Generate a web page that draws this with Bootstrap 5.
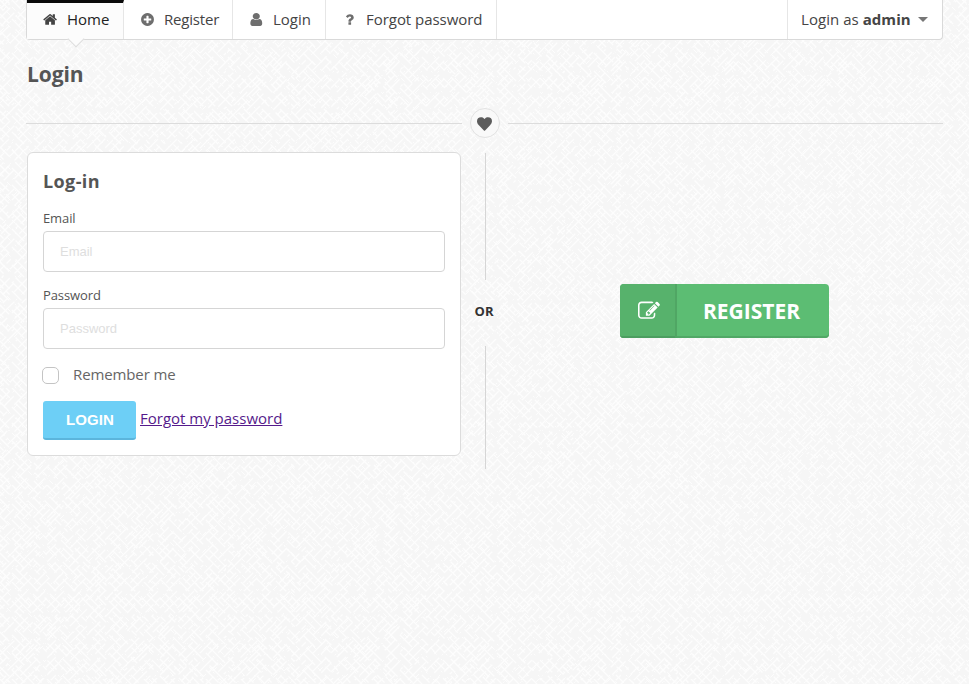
<!DOCTYPE html>
<html lang="en">
<head>
<meta charset="utf-8">
<meta name="viewport" content="width=device-width, initial-scale=1">
<title>Login</title>
<link href="https://cdn.jsdelivr.net/npm/bootstrap@5.3.0/dist/css/bootstrap.min.css" rel="stylesheet">
<style>
body{font-family:"Open Sans",sans-serif;font-size:15px;line-height:20px;color:#666;min-height:684px;background-color:#f6f6f6;
background-image:
url("data:image/svg+xml,%3Csvg xmlns='http://www.w3.org/2000/svg' width='97' height='97'%3E%3Cg stroke='%23fdfdfd' stroke-width='1.300' fill='none'%3E%3Cpath stroke-dasharray='13 9 22 5 7 11' d='M0 0l97 97M12 0l85 85M0 85l12 12M29 0l68 68M0 68l29 29M47 0l50 50M0 50l47 47M66 0l31 31M0 31l66 66M83 0l14 14M0 14l83 83'/%3E%3Cpath stroke-dasharray='5 12 17 14 9 4' d='M6 0l91 91M0 91l6 6M21 0l76 76M0 76l21 21M38 0l59 59M0 59l38 38M56 0l41 41M0 41l56 56M74 0l23 23M0 23l74 74M90 0l7 7M0 7l90 90'/%3E%3C/g%3E%3C/svg%3E"),
url("data:image/svg+xml,%3Csvg xmlns='http://www.w3.org/2000/svg' width='113' height='113'%3E%3Cg stroke='%23fdfdfd' stroke-width='1.300' fill='none'%3E%3Cpath stroke-dasharray='11 7 19 10 6 3' d='M113 0L0 113M9 0L0 9M113 9L9 113M27 0L0 27M113 27L27 113M44 0L0 44M113 44L44 113M62 0L0 62M113 62L62 113M80 0L0 80M113 80L80 113M99 0L0 99M113 99L99 113'/%3E%3Cpath stroke-dasharray='3 8 14 12 24 9' d='M4 0L0 4M113 4L4 113M18 0L0 18M113 18L18 113M35 0L0 35M113 35L35 113M53 0L0 53M113 53L53 113M71 0L0 71M113 71L71 113M90 0L0 90M113 90L90 113M107 0L0 107M113 107L107 113'/%3E%3C/g%3E%3C/svg%3E"),
url("data:image/svg+xml,%3Csvg xmlns='http://www.w3.org/2000/svg' width='71' height='71'%3E%3Cpath stroke='%23fff' stroke-opacity='.8' stroke-dasharray='2 4 1 3 5 6 2 7' d='M0 5l66 66M0 17l54 54M0 33l38 38M0 48l23 23M5 0l66 66M22 0l49 49M39 0l32 32M58 0l13 13M13 0L0 13M32 0L0 32M50 0L0 50M67 0L0 67M71 11L11 71M71 28L28 71M71 45L45 71'/%3E%3C/svg%3E")}
.glyph{fill:currentColor;display:block;flex:none}
.page-wrap{padding:0 26px}
.topbar{height:40px;background:#fff;border:1px solid #d9d9d9;border-top:0;border-radius:0 0 4px 4px}
.topbar .nav-link{height:39px;padding:0 0 0 16px;border-right:1px solid #e6e6e6;color:#444;gap:9px}
.topbar .nav-link>span:first-of-type{padding-bottom:2px}
.topbar .glyph{color:#6e6e6e}
.topbar .nav-link.current{position:relative;width:97px;color:#222;background:#fcfcfc;border-top:3px solid #0a0a0a;padding-bottom:3px}
.topbar .nav-link.current .glyph{color:#444}
.topbar .nav-link.current::after{content:"";position:absolute;left:43px;bottom:-6px;width:12px;height:12px;background:#fcfcfc;border:solid #ddd;border-width:0 1px 1px 0;transform:rotate(45deg)}
.topbar .to-register{width:109px;letter-spacing:-.2px}
.topbar .to-login{width:93px}
.topbar .to-forgot{width:171px;letter-spacing:-.04px}
.topbar .account{border-left:1px solid #e6e6e6;border-right:0;width:155px;padding:0 0 0 13px;letter-spacing:.05px}
.caret{border:5px solid transparent;border-top-color:#777;border-bottom:0;margin-left:-2px}
.page-title{font-size:21px;line-height:30px;font-weight:700;color:#555;margin:19px 0 19px 1px;letter-spacing:-.1px}
.rule{height:1px;background:#dcdcdc}
.heart{width:30px;height:30px;border:1px solid #e2e2e2;background:#f9f9f9;color:#5c5c5c;margin:0 8px;padding-top:1px}
.panels{padding-top:14px}
.login-box{width:434px;height:304px;margin-left:1px;padding:16px 15px 0;border:1px solid #dcdcdc;border-radius:6px;background:#fff}
.login-box h2{font-size:18px;line-height:24px;font-weight:700;color:#555;margin:0 0 16px;letter-spacing:.4px}
.login-box label.field-name{font-size:13px;line-height:18px;display:block;margin-bottom:4px;color:#555;letter-spacing:-.1px}
.login-box .form-control{height:41px;padding:0 16px;font:13px "Liberation Sans",Arial,sans-serif;border-color:#d5d5d5;border-radius:4px;margin-bottom:14px}
.login-box .form-control::placeholder{color:#dedede}
.login-box .form-check-input{width:17px;height:17px;border:1px solid #c4c4c4;border-radius:5px;margin:3px 14px 0 -1px;float:none}
.remember{margin:15px 0 17px;height:20px;letter-spacing:-.12px}
.actions{gap:4px}
.btn-login{width:93px;height:39px;padding:0 0 0 1px;border:0;border-bottom:2px solid #5bb5dc;border-radius:3px;background:#6dcff6;color:#fff;font:bold 15px "Liberation Sans",Arial,sans-serif;letter-spacing:.1px}
.forgot{color:#551a8b;margin-top:7px}
.splitter{width:24px;margin-left:12px;padding-top:1px}
.vline{width:1px;height:127px;background:#d6d6d6}
.vline:last-child{height:123px}
.or-word{font-size:13px;font-weight:700;color:#333;height:66px;line-height:63px;margin-right:2px}
.register-side{padding-left:8px}
.btn-register{width:209px;height:54px;margin-top:132px;border-radius:4px;background:#5cbd73;color:#fff;border:0;box-shadow:inset 0 -2px #51a866;font-size:21px;font-weight:700;overflow:hidden}
.btn-register:hover{background:#5cbd73;color:#fff}
.reg-label{padding:1px 2px 0 0}
.reg-icon{width:57px;height:54px;padding-left:4px;background:#57b26c;border-right:2px solid #50a664;box-shadow:inset 0 -2px #4c9e60}
</style>
<script src="https://cdn.jsdelivr.net/npm/bootstrap@5.3.0/dist/js/bootstrap.bundle.min.js"></script>
</head>
<body>
<div class="page-wrap">
<nav class="topbar d-flex justify-content-between">
<div class="d-flex">
<a href="#" class="nav-link current d-flex align-items-center"><svg class="glyph" width="15" height="15" viewBox="50 0 1792 1792"><path d="M1472 992v480q0 26-19 45t-45 19h-384v-384h-256v384h-384q-26 0-45-19t-19-45v-480q0-1 .5-3t.5-3l575-474 575 474q1 2 1 6zm223-69l-62 74q-8 9-21 11h-3q-13 0-21-7l-692-577-692 577q-12 8-24 7-13-2-21-11l-62-74q-8-10-7-23.500t11-21.500l719-599q32-26 76-26t76 26l244 204v-195q0-14 9-23t23-9h192q14 0 23 9t9 23v408l219 182q10 8 11 21.500t-7 23.500z"/></svg><span>Home</span></a>
<a href="#" class="nav-link to-register d-flex align-items-center"><svg class="glyph" width="15" height="15" viewBox="0 0 1792 1792"><path d="M1344 960v-128q0-26-19-45t-45-19h-256v-256q0-26-19-45t-45-19h-128q-26 0-45 19t-19 45v256h-256q-26 0-45 19t-19 45v128q0 26 19 45t45 19h256v256q0 26 19 45t45 19h128q26 0 45-19t19-45v-256h256q26 0 45-19t19-45zm320-64q0 209-103 385.500t-279.500 279.500-385.500 103-385.500-103-279.500-279.500-103-385.500 103-385.500 279.500-279.500 385.500-103 385.500 103 279.500 279.500 103 385.500z"/></svg><span>Register</span></a>
<a href="#" class="nav-link to-login d-flex align-items-center"><svg class="glyph" width="15" height="15" viewBox="110 0 1620 1792" preserveAspectRatio="none"><path d="M1536 1399q0 109-62.500 187t-150.500 78h-854q-88 0-150.500-78t-62.500-187q0-85 8.500-160.500t31.500-152 58.500-131 94-89 134.500-34.500q131 128 313 128t313-128q76 0 134.500 34.500t94 89 58.500 131 31.500 152 8.500 160.500zm-256-887q0 159-112.500 271.500t-271.500 112.500-271.500-112.500-112.500-271.500 112.500-271.500 271.500-112.500 271.500 112.500 112.500 271.500z"/></svg><span>Login</span></a>
<a href="#" class="nav-link to-forgot d-flex align-items-center"><svg class="glyph" width="15" height="15" viewBox="0 0 1792 1792"><path d="M1088 1256v240q0 16-12 28t-28 12h-240q-16 0-28-12t-12-28v-240q0-16 12-28t28-12h240q16 0 28 12t12 28zm316-600q0 54-15.500 101t-35 76.500-55 59.500-57.500 43.500-61 35.500q-41 23-68.500 65t-27.500 67q0 17-12 32.500t-28 15.500h-240q-15 0-25.500-18.500t-10.500-37.500v-45q0-83 65-156.500t143-108.500q59-27 84-56t25-76q0-42-46.500-74t-107.500-32q-65 0-108 29-35 25-107 115-13 16-31 16-12 0-25-8l-164-125q-13-10-15.500-25t5.500-28q160-266 464-266 80 0 161 31t146 83 106 127.500 41 158.500z"/></svg><span>Forgot password</span></a>
</div>
<a href="#" class="nav-link account d-flex align-items-center"><span>Login as <strong>admin</strong></span><span class="caret"></span></a>
</nav>
<h1 class="page-title">Login</h1>
<div class="d-flex align-items-center">
<div class="rule flex-grow-1"></div>
<div class="heart rounded-circle d-flex align-items-center justify-content-center"><svg class="glyph" width="15" height="16" viewBox="0 0 1792 1792" preserveAspectRatio="none"><path d="M896 1664q-26 0-44-18l-624-602q-10-8-27.500-26t-55.500-65.500-68-97.500-53.500-121-23.500-138q0-220 127-344t351-124q62 0 126.500 21.500t120 58 95.500 68.500 76 68q36-36 76-68t95.500-68.500 120-58 126.500-21.500q224 0 351 124t127 344q0 221-229 450l-623 600q-18 18-44 18z"/></svg></div>
<div class="rule flex-grow-1"></div>
</div>
<main class="panels d-flex align-items-start">
<form class="login-box">
<h2>Log-in</h2>
<label class="field-name" for="email">Email</label>
<input id="email" type="email" class="form-control" placeholder="Email">
<label class="field-name" for="password">Password</label>
<input id="password" type="password" class="form-control" placeholder="Password">
<div class="remember d-flex"><input id="remember" type="checkbox" class="form-check-input"><label for="remember">Remember me</label></div>
<div class="actions d-flex align-items-start"><button type="button" class="btn btn-login">LOGIN</button><a class="forgot" href="#">Forgot my password</a></div>
</form>
<div class="splitter d-flex flex-column align-items-center"><div class="vline"></div><div class="or-word">OR</div><div class="vline"></div></div>
<div class="register-side flex-grow-1 d-flex justify-content-center"><a href="#" class="btn btn-register p-0 d-flex align-items-center"><span class="reg-icon d-flex align-items-center justify-content-center"><svg class="glyph" width="22" height="22" viewBox="0 0 1792 1792"><path d="M888 1184l116-116-152-152-116 116v56h96v96h56zm440-720q-16-16-33 1l-350 350q-17 17-1 33t33-1l350-350q17-17 1-33zm80 594v190q0 119-84.500 203.500t-203.500 84.500h-832q-119 0-203.500-84.500t-84.500-203.500v-832q0-119 84.500-203.500t203.500-84.500h832q63 0 117 25 15 7 18 23 3 17-9 29l-49 49q-14 14-32 8-23-6-45-6h-832q-66 0-113 47t-47 113v832q0 66 47 113t113 47h832q66 0 113-47t47-113v-126q0-13 9-22l64-64q15-15 35-7t20 29zm-96-738l288 288-672 672h-288v-288zm444 132l-92 92-288-288 92-92q28-28 68-28t68 28l152 152q28 28 28 68t-28 68z"/></svg></span><span class="reg-label flex-grow-1 text-center">REGISTER</span></a></div>
</main>
</div>
</body>
</html>
